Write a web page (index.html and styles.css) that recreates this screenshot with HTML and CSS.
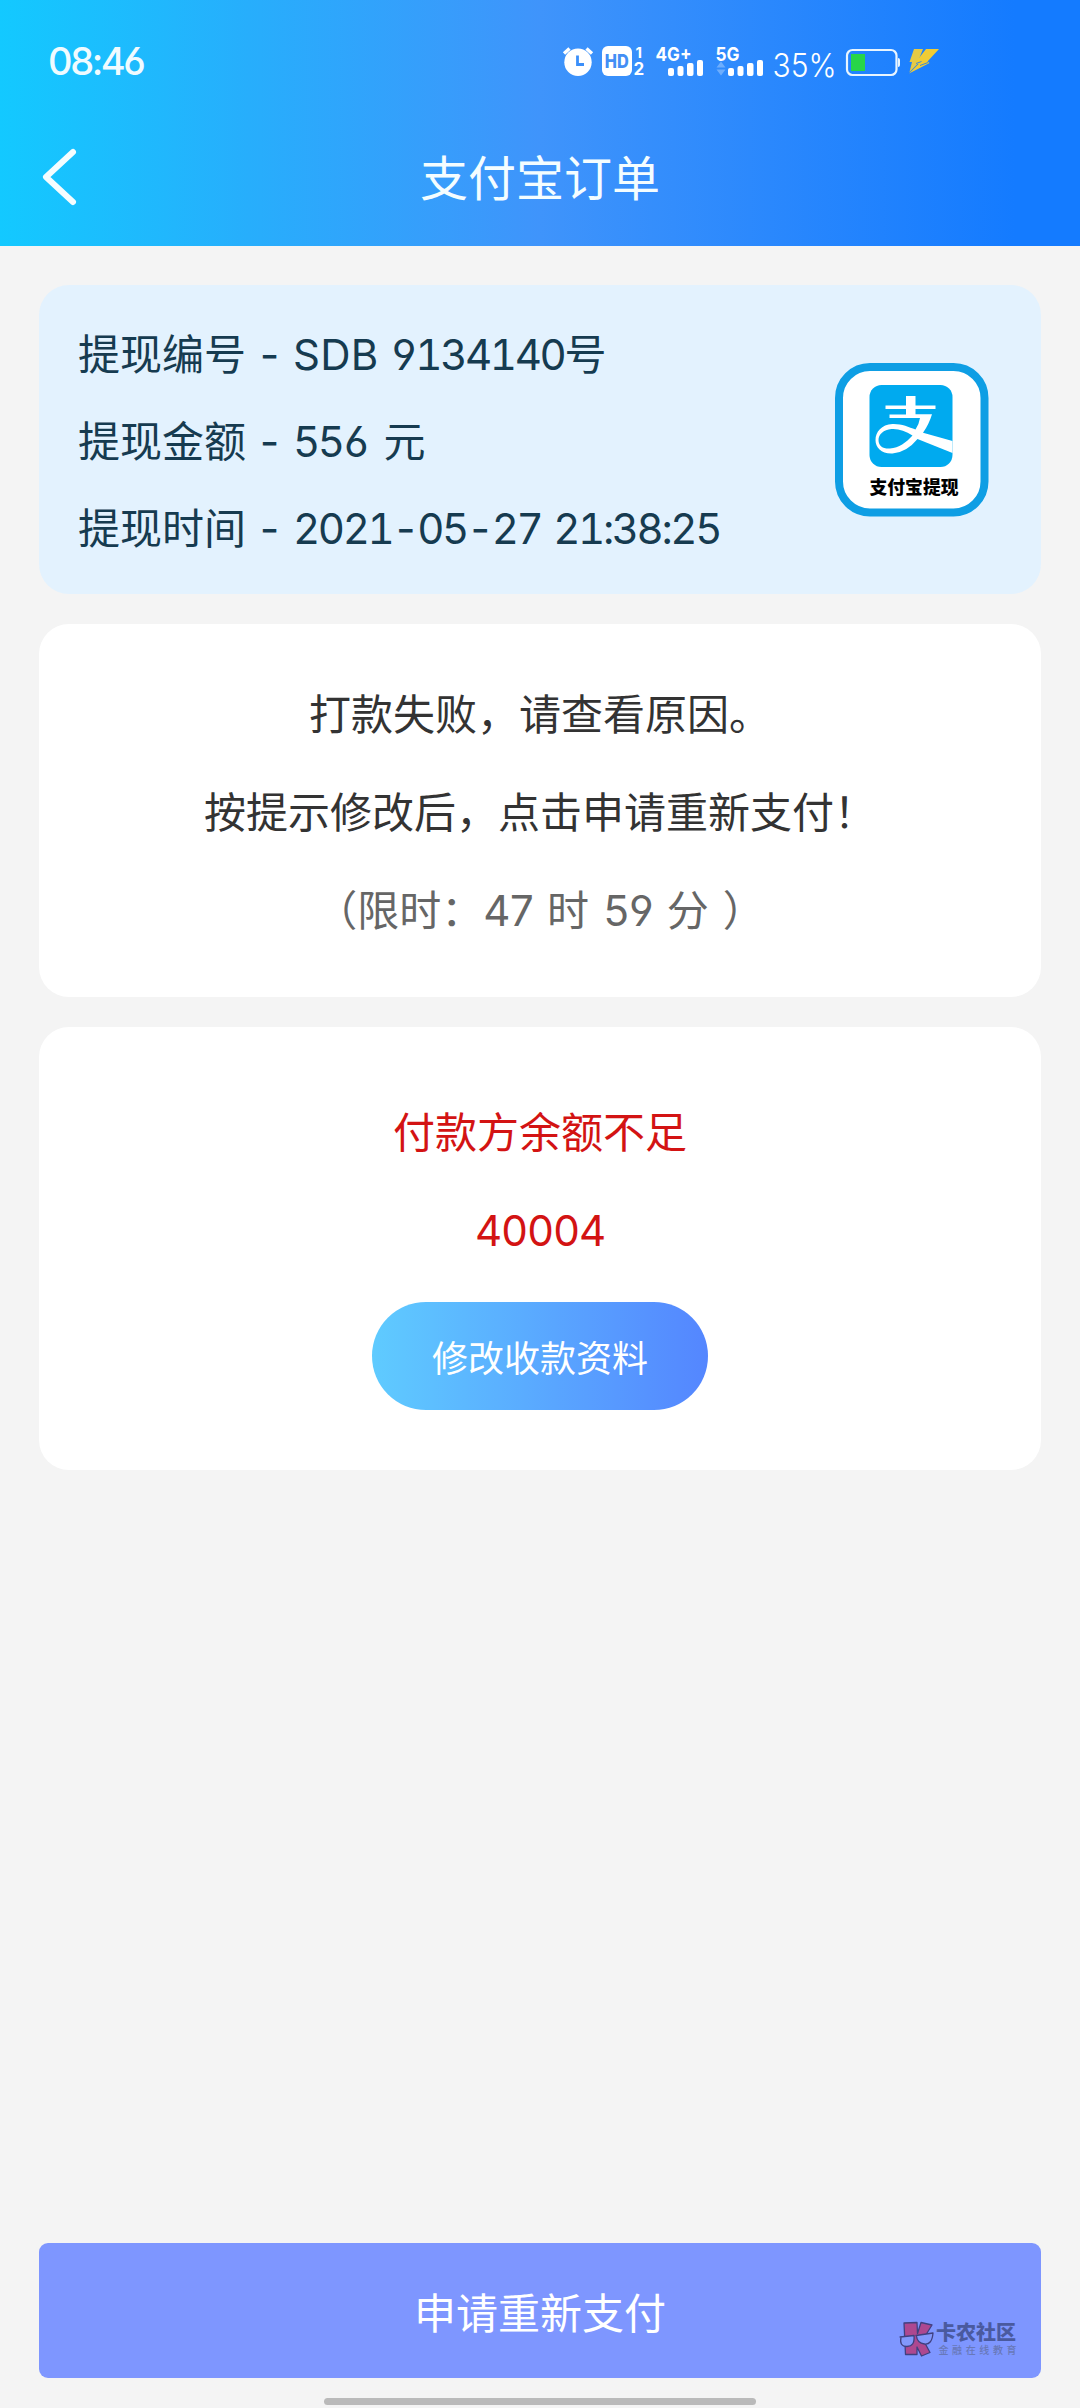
FILE: index.html
```html
<!DOCTYPE html>
<html lang="zh-CN">
<head>
<meta charset="utf-8">
<title>支付宝订单</title>
<link rel="stylesheet" href="styles.css">
</head>
<body>
<div class="page">
  <header class="header">
    <div class="status">
      <span class="clock">08:46</span>
      <svg class="status-icons" width="380" height="50" viewBox="560 35 380 50">
        <g fill="#fff">
          <circle cx="578" cy="62.3" r="13.7"/>
          <path d="M564 53.5l5.500-5M592 53.500l-5.500-5" stroke="#fff" stroke-width="3.400"/>
          <path d="M577.500 55.500v9h6.500" fill="none" stroke="#3b8ffa" stroke-width="2.800"/>
          <rect x="602" y="46" width="30" height="30" rx="6"/>
          <text x="604.800" y="67.800" class="hd" textLength="24" lengthAdjust="spacingAndGlyphs">HD</text>
          <text x="635.500" y="57.500" class="sim" font-size="15">1</text>
          <text x="633.500" y="75" class="sim" font-size="17">2</text>
          <text x="655.500" y="60.500" class="sim" font-size="19" textLength="36" lengthAdjust="spacingAndGlyphs">4G+</text>
          <rect x="668" y="68" width="6" height="8" rx="2"/><rect x="677.500" y="66" width="6" height="10" rx="2"/>
          <rect x="687" y="63" width="6.500" height="13" rx="2"/><rect x="697" y="60" width="6" height="16" rx="2"/>
          <text x="715.500" y="60.500" class="sim" font-size="19" textLength="24" lengthAdjust="spacingAndGlyphs">5G</text>
          <path d="M716.500 67.500l4.500-6 4.500 6zM716.500 69.500l4.500 6 4.500-6z" opacity=".3"/>
          <rect x="728" y="68" width="6" height="8" rx="2"/><rect x="737.500" y="66" width="6" height="10" rx="2"/>
          <rect x="747" y="63" width="6.500" height="13" rx="2"/><rect x="757" y="60" width="6" height="16" rx="2"/>
          <text x="772.500" y="76.500" class="percent" textLength="64" lengthAdjust="spacingAndGlyphs">35%</text>
        </g>
        <rect x="847" y="50" width="49.500" height="25" rx="5.500" fill="none" stroke="#e8f5ff" stroke-width="2.200"/>
        <path d="M898 58q2 0 2 2v5q0 2-2 2z" fill="#e8f5ff"/>
        <rect x="851" y="54" width="14" height="17" fill="#27d548"/>
        <path d="M914 49h9l-5 12.500 1.500.5-10 10 2.500-10h-2.500z" fill="#e5ca45"/>
        <path d="M926 49h13l-11.500 12.500 2 1.500-20.500 10.500 9.500-9.500-3-1.500z" fill="#f0cc35"/>
        <path d="M916 63.500l5.500-2M920 65.500l8-3" stroke="#3d8ad8" stroke-width="1"/>
      </svg>
    </div>
    <div class="nav">
      <svg class="back" width="40" height="60" viewBox="0 0 40 60"><path d="M33 5L6 30l27 25" fill="none" stroke="#f4fdff" stroke-width="6" stroke-linecap="round" stroke-linejoin="round"/></svg>
      <h1 class="title">支付宝订单</h1>
    </div>
  </header>
  <main class="content">
    <section class="info">
      <div class="info-rows">
        <p>提现编号<span class="dash">-</span><span class="num"><span class="prefix">SDB</span> 9134140</span>号</p>
        <p>提现金额<span class="dash">-</span><span class="num">556 </span><span class="unit">元</span></p>
        <p>提现时间<span class="dash">-</span><span class="num">2021-05-27 21:38:25</span></p>
      </div>
      <svg class="logo" width="154" height="154" viewBox="25.500 22 154 154">
        <rect x="29.500" y="26" width="145.500" height="145.500" rx="31" fill="#fff" stroke="#0e9ee4" stroke-width="8"/>
        <rect x="60" y="44" width="83" height="82" rx="12" fill="#00aaef"/>
        <path d="M96.500 55h9.500v9.500h20v3.500h-20v5.300h16.500q-3 10-9 18.500l29.500 8.200v12l-35-14q-11 13.500-25 14.500c-11 .5-17-6-17-13.500 0-8 6-15.500 17-16 9-.3 16 3 23 5.500q3.500-5 4.500-11.500H80v-3.500h16.500v-5.500H76v-3.500h20.500z" fill="#fff"/>
        <path d="M103 94.500c-7-4.500-14-7-21-6.500-8 .7-13 5.500-13 11 0 6.500 5 9 11.500 8.500 9-.5 16-6 22.500-13z" fill="#00aaef"/>
        <text x="60" y="152.500" class="logo-text" textLength="89" lengthAdjust="spacingAndGlyphs">支付宝提现</text>
      </svg>
    </section>
    <section class="card notice">
      <p>打款失败，请查看原因。</p>
      <p>按提示修改后，点击申请重新支付！</p>
      <p class="limit">（限时：<span class="num">47</span><span class="gap">时</span><span class="num">59</span><span class="gap">分</span>）</p>
    </section>
    <section class="card reason">
      <p>付款方余额不足</p>
      <p class="code">40004</p>
      <button class="edit">修改收款资料</button>
    </section>
  </main>
  <footer class="footer">
    <button class="submit">申请重新支付
      <svg class="mark" width="122" height="44" viewBox="0 -4 122 44">
        <g stroke="#404080" stroke-width="1.300" stroke-linejoin="round">
          <path d="M5 3l13-.5.500 11L22 2.500 33 5l-9 14.500 7 13-8.500 3.500-4.500-9v7.500H6.500z" fill="#ad4890"/>
          <path d="M1 17l14-1.500q1 11-7 11t-6-9zM17 15.500L34 13q-1 12-8.500 11t-8-8z" fill="#8298fc"/>
        </g>
        <text x="37" y="19.500" class="mark-name" textLength="80" lengthAdjust="spacingAndGlyphs">卡农社区</text>
        <text x="39.500" y="33.500" class="mark-sub" textLength="78">金融在线教育</text>
      </svg>
    </button>
    <div class="home-bar"></div>
  </footer>
</div>
</body>
</html>
```
FILE: styles.css
```css
* { box-sizing: border-box; }

body, p, h1 { margin: 0; }

body {
  background: #f4f4f4;
  font-family: "Noto Sans CJK SC", sans-serif;
  font-size: 42px;
}

button {
  border: 0;
  padding: 0;
  color: #fff;
  font-family: inherit;
}

.page {
  display: flex;
  flex-direction: column;
  width: 1080px;
  height: 2408px;
}

.header {
  height: 246px;
  background: linear-gradient(90deg, #13c9ff 0%, #27aefc 23%, #3f94fb 50%, #147bff 94%, #147bff 100%);
}

.status {
  display: flex;
  align-items: center;
  justify-content: space-between;
  height: 120px;
  padding: 0 140px 0 48px;
}

.clock {
  padding-top: 2px;
  color: #f0fbff;
  font: 500 38px/40px Inter, sans-serif;
  letter-spacing: -2.4px;
  font-feature-settings: "cv03", "cv04";
}

.hd, .sim { font-family: Inter, sans-serif; font-weight: 700; }
.hd { font-size: 19px; fill: #438ff5; font-weight: 800; }
.percent { font: 300 32px Inter, sans-serif; }

.nav {
  display: grid;
  grid-template-columns: 80px 1fr 80px;
  align-items: center;
  height: 114px;
}

.back { margin-left: 40px; }

.title {
  padding-bottom: 5px;
  color: #f4fdff;
  font-size: 48px;
  font-weight: 400;
  line-height: 60px;
  text-align: center;
}

.content {
  display: flex;
  flex-direction: column;
  gap: 30px;
  padding: 39px 39px 0;
}

.info {
  display: flex;
  align-items: center;
  justify-content: space-between;
  height: 309px;
  padding: 0 52px 0 39px;
  border-radius: 30px;
  background: #e3f2fe;
  color: #163b50;
}

.info-rows { padding-bottom: 2px; }
.info-rows p { height: 87px; line-height: 87px; white-space: pre; }

.num, .dash, .code {
  font-family: Inter, sans-serif;
  font-feature-settings: "cv03", "cv04", "tnum";
}

.num { line-height: 1; letter-spacing: -2.4px; word-spacing: 3px; }
.prefix { letter-spacing: .3px; }
.dash { display: inline-block; width: 47px; line-height: 1; text-align: center; }
.unit { margin-left: 4px; }

.logo-text { font-size: 18px; font-weight: 900; }

.card {
  border-radius: 30px;
  background: #fff;
  text-align: center;
}

.notice {
  height: 373px;
  padding-top: 39px;
  color: #333;
}

.notice p { height: 98px; line-height: 98px; }
.notice .limit { color: #666; }
.gap { margin: 0 14px; }

.reason {
  display: flex;
  flex-direction: column;
  align-items: center;
  height: 443px;
  padding-top: 54px;
  color: #d31313;
}

.reason p { line-height: 98px; }
.reason .code { padding-top: 3px; letter-spacing: -1.2px; }

.edit {
  width: 336px;
  height: 108px;
  margin-top: 22px;
  border-radius: 54px;
  background: linear-gradient(90deg, #5fcbff, #5486ff);
  font-size: 36px;
}

.footer {
  display: flex;
  flex-direction: column;
  align-items: center;
  gap: 20px;
  margin-top: auto;
  padding-bottom: 3px;
}

.submit {
  position: relative;
  width: 1002px;
  height: 135px;
  border-radius: 9px;
  background: #7e96ff;
  font-size: 42px;
}

.mark {
  position: absolute;
  right: 20px;
  bottom: 18px;
}

.mark-name { font-size: 20px; font-weight: 900; fill: #4a5a9f; }
.mark-sub { font-size: 10px; font-weight: 500; fill: #6878b8; }

.home-bar {
  width: 432px;
  height: 7px;
  border-radius: 4px;
  background: #bababa;
}
```
